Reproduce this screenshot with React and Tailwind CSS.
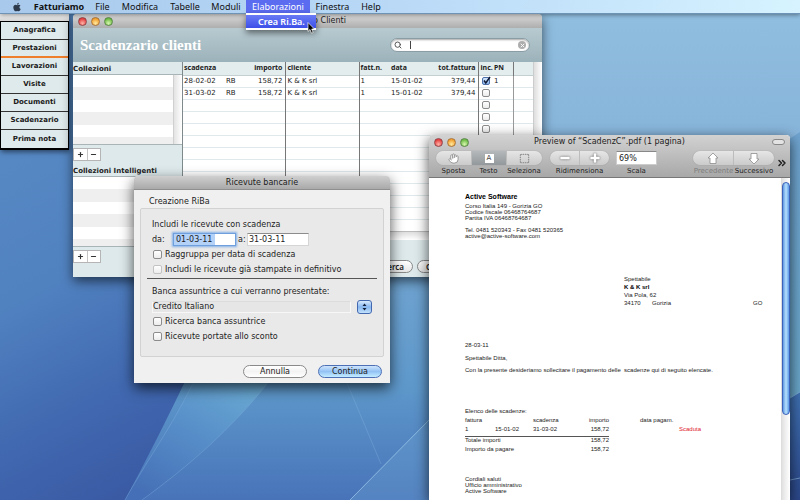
import { useState } from "react";
import { FaApple } from "react-icons/fa";
import { Search, Hand, BoxSelect, Minus, Plus, ChevronsRight } from "lucide-react";

const menus = [
  { label: "File", width: "w-[27px]" },
  { label: "Modifica", width: "w-[48px]" },
  { label: "Tabelle", width: "w-[42px]" },
  { label: "Moduli", width: "w-[40px]" },
  { label: "Elaborazioni", width: "w-[64px]", open: true },
  { label: "Finestra", width: "w-[45px]" },
  { label: "Help", width: "w-[32px]" },
];

const sections = ["Anagrafica", "Prestazioni", "Lavorazioni", "Visite", "Documenti", "Scadenzario", "Prima nota"];

const deadlines = [
  { date: "28-02-02", type: "RB", amount: "158,72", client: "K & K srl", invoice: "1", issued: "15-01-02", total: "379,44", paid: true, pn: "1" },
  { date: "31-03-02", type: "RB", amount: "158,72", client: "K & K srl", invoice: "1", issued: "15-01-02", total: "379,44" },
  ...Array.from({ length: 11 }, () => ({})),
];

function Wallpaper() {
  return (
    <svg className="absolute inset-0 w-full h-full" viewBox="0 0 800 500" preserveAspectRatio="none" aria-hidden="true">
      <defs>
        <linearGradient id="sky" x1="0" y1="0" x2="0" y2="1">
          <stop offset="0" stopColor="#91bfe0" />
          <stop offset="0.3" stopColor="#86b3d9" />
          <stop offset="0.55" stopColor="#6fa3d0" />
          <stop offset="0.78" stopColor="#5d97ca" />
          <stop offset="1" stopColor="#4873b9" />
        </linearGradient>
        <linearGradient id="deep" x1="0" y1="0" x2="0.35" y2="1">
          <stop offset="0" stopColor="#5c8fc8" />
          <stop offset="0.55" stopColor="#5182c0" />
          <stop offset="0.8" stopColor="#4169b1" />
          <stop offset="1" stopColor="#3a5aa4" />
        </linearGradient>
        <linearGradient id="ray" x1="0.9" y1="0" x2="0.2" y2="1">
          <stop offset="0" stopColor="#6aaad3" />
          <stop offset="0.5" stopColor="#568dc8" />
          <stop offset="1" stopColor="#456fb6" />
        </linearGradient>
        <linearGradient id="corner" x1="0" y1="0" x2="0" y2="1">
          <stop offset="0" stopColor="#3f71b3" />
          <stop offset="1" stopColor="#2b4789" />
        </linearGradient>
        <linearGradient id="edge" x1="0" y1="0" x2="0" y2="1">
          <stop offset="0" stopColor="#6fa4d0" />
          <stop offset="1" stopColor="#68a5c8" />
        </linearGradient>
      </defs>
      <rect width="800" height="500" fill="url(#sky)" />
      <path d="M0 0H330C280 180 215 330 125 500H0Z" fill="url(#deep)" />
      <path d="M193 383H268C230 430 190 465 142 500H125C150 455 170 430 193 383Z" fill="url(#ray)" />
      <path d="M193 383C170 430 150 455 125 500M268 383C230 430 190 465 142 500M347 383L381 464" fill="none" stroke="#85b5df" strokeOpacity="0.35" />
      <path d="M350 500L430 419V500Z" fill="#6ea4d0" fillOpacity="0.35" />
      <path d="M350 500L430 419" stroke="#a3cfee" strokeOpacity="0.7" />
      <path d="M780 145L800 132V393L780 406Z" fill="url(#edge)" />
      <path d="M780 404L800 392V500H780Z" fill="url(#corner)" />
      <path d="M780 404L800 392M780 482L800 478" stroke="#86b3dc" strokeOpacity="0.7" />
    </svg>
  );
}

function TrafficLights() {
  return (
    <div className="flex gap-1">
      <button aria-label="Chiudi" className="w-[9px] h-[9px] rounded-full border border-[#93464a] bg-[radial-gradient(circle_at_50%_75%,#ffb3a8,#e4403f_70%)]" />
      <button aria-label="Riduci" className="w-[9px] h-[9px] rounded-full border border-[#a8743a] bg-[radial-gradient(circle_at_50%_75%,#ffeaa0,#f2a02f_70%)]" />
      <button aria-label="Ingrandisci" className="w-[9px] h-[9px] rounded-full border border-[#5b8748] bg-[radial-gradient(circle_at_50%_75%,#d9f7b0,#6dbb45_70%)]" />
    </div>
  );
}

function MenuBar() {
  return (
    <nav className="relative z-40 flex h-[14px] items-center border-b border-[#6f93b5] bg-linear-to-r from-[#a9c9ec] via-[#b9d9f7] to-[#d6f3ff] pl-3 font-['Noto_Sans',sans-serif] text-[9px] text-[#111] shadow-[0_1px_4px_rgba(0,0,0,0.4)]">
      <FaApple className="w-[10px] h-[10px] text-[#2c3a4c]" />
      <button className="ml-[7px] w-[60px] text-center font-bold">Fatturiamo</button>
      {menus.map((m) => (
        <div key={m.label} className={`relative h-[13px] text-center ${m.width}`}>
          <button className={`block w-full h-[13px] leading-[13px] ${m.open ? "bg-[#5b6cf0] text-white" : ""}`}>
            {m.label}
          </button>
          {m.open && (
            <div className="absolute left-0 top-[13px] w-[70px] bg-white py-[2px] shadow-[0_3px_6px_rgba(0,0,0,0.5)]">
              <button className="block w-full h-[13px] bg-linear-to-b from-[#6a7af5] to-[#3d4fe8] pl-[12px] text-left leading-[13px] font-semibold whitespace-nowrap text-white">
                Crea Ri.Ba.
              </button>
              <svg className="absolute left-[61px] top-[9px] w-[8px] h-[12px]" viewBox="0 0 8 12" aria-hidden="true">
                <path d="M1 0.5V9.5L3 7.6L4.5 11.2L6.2 10.5L4.7 7H7.4Z" fill="#000" stroke="#fff" strokeWidth="0.7" />
              </svg>
            </div>
          )}
        </div>
      ))}
    </nav>
  );
}

function Palette() {
  return (
    <aside className="absolute left-0 top-[14px] w-[69px] shadow-[1px_2px_5px_rgba(0,0,0,0.5)]">
      <div className="h-[7px] bg-linear-to-b from-[#f4f4f4] to-[#d5d5d5]" />
      <div className="border border-b-2 border-black">
        {sections.map((s) => (
          <button
            key={s}
            className={`block w-full h-[18px] bg-[#dfeaec] text-[7px] font-bold text-[#1a1a1a] last:border-b-0 ${
              s === "Prestazioni" ? "border-b-2 border-b-[#ee7f2d]" : "border-b border-b-[#333]"
            }`}
          >
            {s}
          </button>
        ))}
      </div>
    </aside>
  );
}

function PlusMinus() {
  return (
    <div className="flex h-[13px] w-[28px] border border-[#b5b5b5] bg-white text-[#333]">
      <button aria-label="Aggiungi" className="flex flex-1 items-center justify-center border-r border-[#c5c5c5]">
        <Plus size={7} strokeWidth={4} />
      </button>
      <button aria-label="Rimuovi" className="flex flex-1 items-center justify-center">
        <Minus size={7} strokeWidth={4} />
      </button>
    </div>
  );
}

function StripedList() {
  return (
    <div className="flex h-[71px] border-y border-[#a8b4b6] bg-white">
      <div className="flex-1 bg-[repeating-linear-gradient(to_bottom,#fff_0_12px,#efefef_12px_25px)]" />
      <div className="w-[9px] border-l border-[#d0d0d0] bg-linear-to-r from-[#e3e3e3] to-white" />
    </div>
  );
}

function MacCheck({ checked, small, disabled }) {
  return (
    <span className={`relative block shrink-0 ${small ? "w-[8px] h-[8px]" : "w-[9px] h-[9px]"}`}>
      <input
        type="checkbox"
        aria-label={small ? "incassato" : undefined}
        defaultChecked={checked}
        disabled={disabled}
        className="block w-full h-full appearance-none rounded-[2px] border border-[#8c8c8c] bg-linear-to-b from-white to-[#ececec] checked:border-[#4d6fa8] checked:from-[#d5e6fb] checked:to-[#86b4ee] disabled:border-[#c3c3c3]"
      />
      {checked && (
        <svg className="pointer-events-none absolute -top-[1px] left-0 w-[9px] h-[9px]" viewBox="0 0 9 9" aria-hidden="true">
          <path d="M2 4.5L3.8 7L8 1" fill="none" stroke="#111b33" strokeWidth="1.5" />
        </svg>
      )}
    </span>
  );
}

function MainWindow() {
  return (
    <section className="absolute left-[73px] top-[14px] w-[469px] overflow-hidden rounded-t bg-[#dde9eb] shadow-[0_4px_12px_rgba(0,0,0,0.6)]">
      <header className="grid grid-cols-[1fr_auto_1fr] h-[14px] items-center bg-linear-to-b from-[#dadada] to-[#aeaeae] px-[5px] text-[8px] text-[#222]">
        <TrafficLights />
        <h2>Scadenzario Clienti</h2>
      </header>
      <div className="flex h-[34px] items-center justify-between bg-linear-to-b from-[#b7cad0] to-[#9cb2ba] pl-[7px] pr-[12px]">
        <h1 className="font-['Liberation_Serif',serif] text-[15px] font-bold text-white">Scadenzario clienti</h1>
        <label className="flex h-[14px] w-[140px] items-center rounded-full border border-[#8a9da4] bg-white px-[3px] shadow-[inset_0_1px_2px_rgba(0,0,0,0.35)]">
          <Search size={8} strokeWidth={3} className="text-[#555]" />
          <span className="ml-[8px] h-[8px] w-px bg-[#444]" />
          <input aria-label="Cerca" className="min-w-0 flex-1 bg-transparent px-px text-[8px] outline-none" />
          <button aria-label="Cancella" className="flex w-[8px] h-[8px] items-center justify-center rounded-full bg-[#adadad] text-white">
            <Plus size={7} strokeWidth={3} className="rotate-45" />
          </button>
        </label>
      </div>
      <div className="flex">
        <div className="w-[109px] shrink-0 text-[7px] font-bold text-[#222]">
          <h3 className="h-[12px] leading-[14px]">Collezioni</h3>
          <StripedList />
          <div className="pt-[3px] pb-[5px]"><PlusMinus /></div>
          <h3 className="h-[10px] leading-[10px]">Collezioni Intelligenti</h3>
          <StripedList />
          <div className="pt-[3px]"><PlusMinus /></div>
        </div>
        <div className="min-w-0 flex-1 border-l border-[#7e898b]">
          <div className="flex h-[169px] overflow-hidden bg-white">
            <table className="w-[350px] table-fixed border-collapse text-left text-[7px] text-[#222]">
              <thead className="font-['Noto_Sans',sans-serif]">
                <tr className="h-[13px] border-b border-[#c3cfd1] bg-[#e3edee]">
                  <th className="w-[43px] pl-px">scadenza</th>
                  <th className="w-[15px]" />
                  <th className="w-[44px] border-r border-[#777] pr-[2px] text-right">importo</th>
                  <th className="w-[74px] border-r border-[#777] pl-[2px]">cliente</th>
                  <th className="w-[31px] pl-px">fatt.n.</th>
                  <th className="w-[38px] pl-px">data</th>
                  <th className="w-[50px] border-r border-[#777] pr-[2px] text-right">tot.fattura</th>
                  <th className="w-[14px] pl-[2px]">inc.</th>
                  <th className="w-[21px] border-r border-[#777] pl-[2px]">PN</th>
                  <th />
                </tr>
              </thead>
              <tbody>
                {deadlines.map((d, i) => (
                  <tr key={i} className="h-[12px] border-b border-[#dfe8ea]">
                    <td className="pl-px">{d.date}</td>
                    <td>{d.type}</td>
                    <td className="border-r border-[#777] pr-[2px] text-right">{d.amount}</td>
                    <td className="border-r border-[#777] pl-[2px]">{d.client}</td>
                    <td className="pl-px">{d.invoice}</td>
                    <td className="pl-px">{d.issued}</td>
                    <td className="border-r border-[#777] pr-[2px] text-right">{d.total}</td>
                    <td className="pl-[3px]"><MacCheck small checked={d.paid} /></td>
                    <td className="border-r border-[#999] pl-[2px]">{d.pn}</td>
                    <td />
                  </tr>
                ))}
              </tbody>
            </table>
            <div className="flex-1 border-l border-[#ccc] bg-linear-to-r from-[#dedede] to-white" />
          </div>
          <div className="h-[9px] border-t border-[#bbb] bg-linear-to-b from-[#dedede] to-white" />
          <div className="flex gap-[4px] pt-[20px] pb-[4px] pl-[166px] font-['Noto_Sans',sans-serif] text-[8px] font-semibold text-[#222]">
            <button className="h-[13px] w-[64px] rounded-full border border-[#888] bg-linear-to-b from-white to-[#e5e5e5] pr-2 text-right leading-[11px]">Ricerca</button>
            <button className="h-[13px] w-[64px] rounded-full border border-[#888] bg-linear-to-b from-white to-[#e5e5e5] pl-2 text-left leading-[11px]">Chiudi</button>
          </div>
        </div>
      </div>
    </section>
  );
}

function CheckRow({ children, disabled }) {
  return (
    <label className="flex h-[15px] items-center gap-[3px] pl-px">
      <MacCheck disabled={disabled} />
      {children}
    </label>
  );
}

function RibaDialog() {
  const [from, setFrom] = useState("01-03-11");
  const [to, setTo] = useState("31-03-11");

  return (
    <form
      onSubmit={(e) => e.preventDefault()}
      className="absolute left-[134px] top-[176px] z-10 w-[256px] overflow-hidden rounded-t bg-[#f0f0f0] text-[8px] text-[#1c1c1c] shadow-[0_5px_14px_rgba(0,0,0,0.7)]"
    >
      <h2 className="h-[14px] border-b border-[#8f8f8f] bg-linear-to-b from-[#cfcfcf] to-[#a9a9a9] text-center leading-[14px]">
        Ricevute bancarie
      </h2>
      <h3 className="mt-[6px] h-[12px] pl-[15px] leading-[12px]">Creazione RiBa</h3>
      <div className="mx-[6px] h-[149px] rounded-[2px] border border-[#d2d2d2] bg-[#e9e9e9] px-[11px] pt-[8px]">
        <p className="h-[15px] leading-[15px]">Includi le ricevute con scadenza</p>
        <div className="flex h-[15px] items-center">
          <label htmlFor="from" className="w-[21px]">da:</label>
          <input
            id="from"
            value={from}
            onChange={(e) => setFrom(e.target.value)}
            className="h-[13px] w-[63px] border border-[#6f9fdc] bg-[linear-gradient(90deg,#b4d1f8_41px,#fff_41px)] pl-[2px] shadow-[0_0_2px_1px_#85b0e8] outline-none"
          />
          <label htmlFor="to" className="w-[11px] pl-[2px]">a:</label>
          <input
            id="to"
            value={to}
            onChange={(e) => setTo(e.target.value)}
            className="h-[13px] w-[62px] border border-[#d5d5d5] border-t-[#8c8c8c] bg-white pl-px outline-none"
          />
        </div>
        <CheckRow>Raggruppa per data di scadenza</CheckRow>
        <CheckRow disabled>Includi le ricevute già stampate in definitivo</CheckRow>
        <hr className="-mx-[5px] mt-px mb-[5px] border-[#555]" />
        <label htmlFor="bank" className="block h-[15px] leading-[15px]">Banca assuntrice a cui verranno presentate:</label>
        <div className="flex h-[15px] items-center gap-[6px]">
          <select id="bank" className="h-[12px] w-[202px] appearance-none border border-[#f7f7f7] border-t-[#dcdcdc] bg-[#e6e6e6] leading-[10px]">
            <option>Credito Italiano</option>
          </select>
          <button type="button" aria-label="Scegli banca" className="flex h-[14px] w-[15px] items-center justify-center rounded-[3px] border border-[#4468b0] bg-linear-to-b from-[#d9eafc] via-[#86b6ef] to-[#c3e2fc]">
            <svg className="w-[5px] h-[8px]" viewBox="0 0 5 8" aria-hidden="true">
              <path d="M2.5 0.5L4.5 3H0.5ZM2.5 7.5L4.5 5H0.5Z" fill="#12213d" />
            </svg>
          </button>
        </div>
        <CheckRow>Ricerca banca assuntrice</CheckRow>
        <CheckRow>Ricevute portate allo sconto</CheckRow>
      </div>
      <div className="flex justify-end gap-[11px] pt-[8px] pb-[5px] pr-[8px]">
        <button type="button" className="h-[13px] w-[64px] rounded-full border border-[#8a8a8a] bg-linear-to-b from-white via-[#f3f3f3] to-white leading-[11px]">
          Annulla
        </button>
        <button type="submit" className="h-[13px] w-[64px] rounded-full border border-[#4c6fb5] bg-linear-to-b from-[#cfe4fb] via-[#93c3f5] to-[#c4ecff] leading-[11px]">
          Continua
        </button>
      </div>
    </form>
  );
}

const segment = "flex h-full flex-1 items-center justify-center border-r border-[#bcbcbc] last:border-r-0";

function ToolGroup({ width, children, labels }) {
  return (
    <div className={width}>
      <div className="flex h-[14px] overflow-hidden rounded-full bg-linear-to-b from-[#e6e6e6] to-[#cbcbcb] text-white shadow-[0_0_1px_#888]">
        {children}
      </div>
      <div className="flex justify-around pt-[1px] leading-[10px]">{labels}</div>
    </div>
  );
}

function ArrowIcon({ down }) {
  return (
    <svg className={`w-[12px] h-[13px] ${down ? "rotate-180" : ""}`} viewBox="0 0 12 13" aria-hidden="true">
      <path d="M6 1L11 6H9V11.5H3V6H1Z" fill="#fff" stroke="#8d8d8d" strokeWidth="0.8" strokeLinejoin="round" />
    </svg>
  );
}

function PreviewWindow() {
  return (
    <section className="absolute left-[429px] top-[135px] bottom-0 z-20 flex w-[361px] flex-col overflow-hidden rounded-t bg-white shadow-[0_4px_14px_rgba(0,0,0,0.7)]">
      <header className="border-b border-[#777] bg-linear-to-b from-[#d2d2d2] to-[#a8a8a8] text-[7px] text-[#222]">
        <div className="grid grid-cols-[1fr_auto_1fr] h-[14px] items-center px-[5px] text-[8px]">
          <TrafficLights />
          <h2>Preview of “ScadenzC”.pdf (1 pagina)</h2>
          <button aria-label="Mostra barra" className="h-[6px] w-[13px] justify-self-end rounded-full border border-[#888] bg-[#e3e3e3]" />
        </div>
        <div className="flex h-[28px] items-start pt-[2px] pl-[7px] pr-[2px]">
          <ToolGroup
            width="w-[106px]"
            labels={
              <>
                <span className="w-[35px] text-center">Sposta</span>
                <span className="w-[35px] text-center">Testo</span>
                <span className="w-[36px] text-center">Seleziona</span>
              </>
            }
          >
            <button aria-label="Sposta" className={segment}><Hand size={11} fill="white" stroke="#909090" /></button>
            <button aria-label="Testo" className={`${segment} bg-linear-to-b from-[#b4b8ba] to-[#93989c]`}>
              <span className="block w-[9px] h-[9px] bg-white text-center text-[7px] leading-[9px] text-[#444]">A</span>
            </button>
            <button aria-label="Seleziona" className={segment}><BoxSelect size={11} strokeWidth={3} stroke="#949494" fill="#eee" /></button>
          </ToolGroup>
          <div className="w-[8px]" />
          <ToolGroup width="w-[59px]" labels={<span>Ridimensiona</span>}>
            <button aria-label="Riduci zoom" className={segment}><Minus size={12} strokeWidth={5} className="drop-shadow-[0_0_1px_#555]" /></button>
            <button aria-label="Aumenta zoom" className={segment}><Plus size={12} strokeWidth={5} className="drop-shadow-[0_0_1px_#555]" /></button>
          </ToolGroup>
          <label className="ml-[7px] flex w-[41px] flex-col items-center">
            <input aria-label="Scala" defaultValue="69%" className="h-[14px] w-full border border-[#ccc] border-t-[#888] bg-white pl-[2px] text-[8px]" />
            <span className="pt-[1px] leading-[10px]">Scala</span>
          </label>
          <div className="flex-1" />
          <ToolGroup width="w-[81px]" labels={<><span className="text-[#7d7d7d]">Precedente</span><span>Successivo</span></>}>
            <button aria-label="Precedente" className={segment}><ArrowIcon /></button>
            <button aria-label="Successivo" className={segment}><ArrowIcon down /></button>
          </ToolGroup>
          <button aria-label="Altro" className="ml-[2px] mt-[6px]"><ChevronsRight size={12} strokeWidth={3} /></button>
        </div>
      </header>
      <div className="flex min-h-0 flex-1">
        <article className="min-w-0 flex-1 pl-[36px] pt-[15px] font-['Liberation_Sans',sans-serif] text-[6px] leading-[7px] text-[#222]">
          <h3 className="mb-[2px] text-[7px] leading-[8px] font-bold text-black">Active Software</h3>
          <div className="leading-[6px]">
            <p>Corso Italia 149 - Gorizia GO</p>
            <p>Codice fiscale 06468764687</p>
            <p>Partita IVA 06468764687</p>
            <p className="mt-[6px]">Tel. 0481 520343 - Fax 0481 520365</p>
            <p>active@active-software.com</p>
          </div>
          <address className="mt-[36px] ml-[159px] leading-[8px] not-italic">
            <p>Spettabile</p>
            <p className="font-bold text-black">K &amp; K srl</p>
            <p>Via Pola, 62</p>
            <p className="flex">
              <span className="w-[28px]">34170</span>
              <span className="w-[101px]">Gorizia</span>
              <span>GO</span>
            </p>
          </address>
          <p className="mt-[35px]">28-03-11</p>
          <p className="mt-[6px]">Spettabile Ditta,</p>
          <p className="mt-[5px] whitespace-pre">Con la presente desideriamo sollecitare il pagamento delle  scadenze qui di seguito elencate.</p>
          <p className="mt-[34px] mb-px">Elenco delle scadenze:</p>
          <table className="w-[260px] table-fixed border-collapse text-left">
            <thead>
              <tr className="h-[9px]">
                <th className="w-[30px] font-normal">fattura</th>
                <th className="w-[38px]" />
                <th className="w-[37px] font-normal">scadenza</th>
                <th className="w-[39px] text-right font-normal">importo</th>
                <th className="w-[70px] pl-[31px] font-normal whitespace-nowrap">data pagam.</th>
                <th />
              </tr>
            </thead>
            <tbody>
              <tr className="h-[11px] align-top leading-[9px]">
                <td className="border-b border-[#555]">1</td>
                <td className="border-b border-[#555]">15-01-02</td>
                <td className="border-b border-[#555]">31-03-02</td>
                <td className="border-b border-[#555] text-right">158,72</td>
                <td />
                <td className="text-[#e0202c]">Scaduta</td>
              </tr>
              <tr className="h-[9px]">
                <td colSpan="3">Totale importi</td>
                <td className="text-right">158,72</td>
              </tr>
              <tr className="h-[9px]">
                <td colSpan="3">Importo da pagare</td>
                <td className="text-right">158,72</td>
              </tr>
            </tbody>
          </table>
          <div className="mt-[22px] leading-[6px]">
            <p>Cordiali saluti</p>
            <p>Ufficio amministrativo</p>
            <p>Active Software</p>
          </div>
        </article>
        <div className="w-[9px] border-l border-[#ddd] bg-linear-to-r from-[#e2e2e2] to-white pt-[4px]">
          <div className="h-[233px] rounded-full border border-[#3c62ba] bg-linear-to-r from-[#5f97e2] via-[#b7e0fc] to-[#5c9be8]" />
        </div>
      </div>
    </section>
  );
}

export default function App() {
  return (
    <div className="relative min-h-screen overflow-hidden font-['DejaVu_Sans',sans-serif]">
      <Wallpaper />
      <MenuBar />
      <Palette />
      <MainWindow />
      <RibaDialog />
      <PreviewWindow />
    </div>
  );
}
